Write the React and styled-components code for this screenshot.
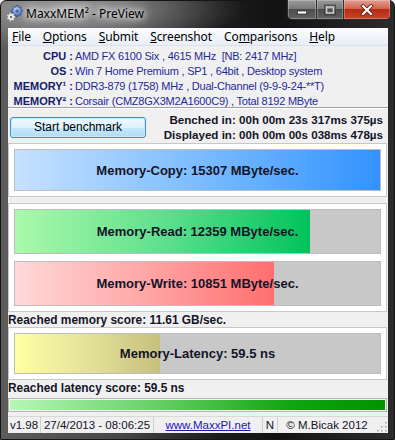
import styled, { createGlobalStyle } from "styled-components";

const UI = `"Liberation Sans", Tahoma, Arial, sans-serif`;
const SEGOE = `"Noto Sans", "Segoe UI", sans-serif`;

const GlobalStyle = createGlobalStyle`
	html, body {
		margin: 0;
		padding: 0;
		background: #fff;
	}
	body {
		width: 395px;
		height: 440px;
		overflow: hidden;
	}
`;

const S = {
	Window: styled.div`
		width: 395px;
		height: 440px;
		box-sizing: border-box;
		display: flex;
		flex-direction: column;
		padding: 0 6px 6px 7px;
		border: 1px solid #151515;
		border-radius: 6px 6px 0 0;
		background:
			radial-gradient(ellipse 230px 55px at 70px 8px, rgba(210, 210, 210, 0.6), rgba(210, 210, 210, 0) 75%),
			linear-gradient(to right, #5c5c5c 0%, #474747 30%, #1d1d1d 55%, #121212 70%, #2c2c2c 100%);
	`,

	TitleBar: styled.div`
		height: 27px;
		margin: 0 -3px 0 -2px;
		display: flex;
		align-items: flex-start;
	`,

	AppIcon: styled.svg`
		width: 17px;
		height: 17px;
		margin: 4px 0 0 0;
		flex: none;
	`,

	Title: styled.div`
		margin: 5px 0 0 3px;
		font-family: ${SEGOE};
		font-size: 12px;
		line-height: 16px;
		color: #000;
		text-shadow: 0 0 6px #fff, 0 0 10px rgba(255, 255, 255, 0.9), 0 0 14px rgba(255, 255, 255, 0.7);
	`,

	Captions: styled.div`
		margin-left: auto;
		display: flex;
		height: 19px;
		margin-top: -1px;
		border: 1px solid #2a2a2a;
		border-top: none;
		border-radius: 0 0 5px 5px;
		overflow: hidden;
	`,

	CaptionButton: styled.div`
		width: ${(p) => p.$w}px;
		display: flex;
		align-items: center;
		justify-content: center;
		box-shadow: inset 0 0 0 1px rgba(255, 255, 255, 0.25);
		background: ${(p) =>
			p.$close
				? "linear-gradient(#e3a092 0%, #d2634f 45%, #b82a13 50%, #c7462c 100%)"
				: "linear-gradient(#9a9a9a 0%, #7a7a7a 45%, #4d4d4d 50%, #626262 100%)"};
		& + & {
			border-left: 1px solid #2e2e2e;
		}
	`,

	Client: styled.div`
		flex: 1;
		display: flex;
		flex-direction: column;
		background: #f0f0f0;
		font-family: ${UI};
	`,

	MenuBar: styled.div`
		height: 18px;
		display: flex;
		align-items: center;
		background: linear-gradient(#fbfcfe, #e8eef7);
		border-bottom: 1px solid #d9e1ec;
		box-sizing: border-box;
		font-family: ${SEGOE};
		font-size: 12px;
		color: #000;
	`,

	MenuItem: styled.span`
		padding: 0 6px;
		letter-spacing: -0.1px;
		&:first-child {
			padding-left: 4px;
		}
	`,

	Info: styled.div`
		height: 61px;
		box-sizing: border-box;
		padding-top: 3px;
		display: grid;
		grid-template-columns: 65px 1fr;
		grid-auto-rows: 15px;
		column-gap: 2px;
		font-size: 11px;
		line-height: 15px;
		white-space: nowrap;
	`,

	Label: styled.div`
		text-align: right;
		font-weight: bold;
		color: #14206e;
	`,

	Value: styled.div`
		color: #1f2a9a;
		letter-spacing: -0.22px;
	`,

	Separator: styled.div`
		height: 0;
		border-top: 1px solid #a0a0a0;
		border-bottom: 1px solid #fff;
	`,

	ActionRow: styled.div`
		height: 30px;
		margin-top: 3px;
		display: flex;
		align-items: center;
		padding: 0 5px 0 2px;
	`,

	StartButton: styled.div`
		width: 136px;
		height: 21px;
		box-sizing: border-box;
		display: flex;
		align-items: center;
		justify-content: center;
		border: 1px solid #3c8fc8;
		border-radius: 3px;
		box-shadow: inset 0 0 0 1px #c8ecfc;
		background: linear-gradient(#eef8fe 0%, #dff2fd 50%, #c6e8fb 51%, #b2dcf5 100%);
		font-size: 12px;
		color: #000;
	`,

	Timing: styled.div`
		margin-left: auto;
		text-align: right;
		font-size: 11.6px;
		font-weight: bold;
		line-height: 15px;
		color: #141428;
	`,

	Panel: styled.div`
		margin: ${(p) => p.$top}px 1px 0 0;
		padding: 5px;
		display: flex;
		flex-direction: column;
		gap: 7px;
		background: #fff;
		border: 1px solid #c8c8c8;
	`,

	Bar: styled.div`
		height: ${(p) => p.$h}px;
		box-sizing: border-box;
		display: grid;
		border: 1px solid #bdbdbd;
		background: #c8c8c8;
		& > * {
			grid-area: 1 / 1;
		}
	`,

	Fill: styled.div`
		background: ${(p) => p.$grad};
	`,

	BarText: styled.div`
		align-self: center;
		text-align: center;
		font-size: 13px;
		font-weight: bold;
		color: #141428;
		white-space: nowrap;
	`,

	Score: styled.div`
		height: ${(p) => p.$h}px;
		display: flex;
		align-items: center;
		font-size: 11.9px;
		font-weight: bold;
		color: #141428;
		white-space: nowrap;
	`,

	Progress: styled.div`
		height: 14px;
		margin: 2px 1px 0 0;
		box-sizing: border-box;
		border: 1px solid #b4b4b4;
		padding: 1px;
		background: #f4f4f4;
	`,

	ProgressFill: styled.div`
		height: 100%;
		background: linear-gradient(to right, #b6f7b6 0%, #63cf63 40%, #0fa50f 75%, #009400 100%);
	`,

	StatusBar: styled.div`
		height: 17px;
		margin-top: 4px;
		box-sizing: border-box;
		display: flex;
		border-top: 1px solid #d8d8d8;
		font-size: 11.5px;
		color: #141428;
		white-space: nowrap;
	`,

	StatusCell: styled.div`
		width: ${(p) => p.$w}px;
		flex: ${(p) => (p.$grow ? 1 : "none")};
		display: flex;
		align-items: center;
		justify-content: center;
		padding-right: ${(p) => p.$pr ?? 0}px;
		box-sizing: border-box;
		position: relative;
		& + & {
			border-left: 1px solid #cfcfcf;
		}
	`,

	Link: styled.span`
		color: #1a1aa8;
		text-decoration: underline;
	`,

	Grip: styled.svg`
		position: absolute;
		right: 1px;
		bottom: 1px;
		width: 11px;
		height: 11px;
	`,
};

const gear = (cx, cy, ro, ri, teeth) => {
	const pts = [];
	const step = (Math.PI * 2) / teeth;
	for (let i = 0; i < teeth; i++) {
		const a = i * step;
		[
			[a - step * 0.22, ro],
			[a + step * 0.22, ro],
			[a + step * 0.32, ri],
			[a + step * 0.68, ri],
		].forEach(([t, r]) => pts.push(`${(cx + r * Math.cos(t)).toFixed(2)},${(cy + r * Math.sin(t)).toFixed(2)}`));
	}
	return pts.join(" ");
};

const AppIcon = () => (
	<S.AppIcon viewBox="0 0 17 17">
		<defs>
			<radialGradient id="gb" cx="40%" cy="35%" r="70%">
				<stop offset="0" stopColor="#b8d4ff" />
				<stop offset="1" stopColor="#2c5cc8" />
			</radialGradient>
		</defs>
		<polygon points={gear(11, 6, 5.6, 4.2, 8)} fill="url(#gb)" stroke="#1c3c90" strokeWidth="0.6" />
		<circle cx="11" cy="6" r="1.6" fill="#5a5a5a" />
		<polygon points={gear(5, 12, 4.4, 3.2, 7)} fill="#f4f4f4" stroke="#777" strokeWidth="0.6" />
		<circle cx="5" cy="12" r="1.2" fill="#666" />
	</S.AppIcon>
);

const Glyph = ({ kind }) => (
	<svg width="14" height="12" viewBox="0 0 14 12">
		{kind === "min" && <rect x="2.5" y="7" width="9" height="3" fill="#fff" stroke="#333" strokeWidth="0.8" />}
		{kind === "max" && (
			<g>
				<rect x="2.5" y="2" width="9" height="8" fill="none" stroke="#333" strokeWidth="3" opacity="0.6" />
				<rect x="3.5" y="3" width="7" height="6" fill="none" stroke="#cfcfcf" strokeWidth="1.6" />
			</g>
		)}
		{kind === "close" && (
			<g strokeLinecap="square">
				<path d="M3 2 L11 10 M11 2 L3 10" stroke="#5a1a10" strokeWidth="3.8" />
				<path d="M3 2 L11 10 M11 2 L3 10" stroke="#fff" strokeWidth="2.2" />
			</g>
		)}
	</svg>
);

const menu = [
	["F", "ile"],
	["O", "ptions"],
	["S", "ubmit"],
	["S", "creenshot"],
	["Co", "m", "parisons"],
	["H", "elp"],
];

const info = [
	["CPU :", "AMD FX 6100 Six , 4615 MHz\u00a0\u00a0[NB: 2417 MHz]"],
	["OS :", "Win 7 Home Premium , SP1 , 64bit , Desktop system"],
	["MEMORY\u00b9 :", "DDR3-879 (1758) MHz , Dual-Channel (9-9-9-24-**T)"],
	["MEMORY\u00b2 :", "Corsair (CMZ8GX3M2A1600C9) , Total 8192 MByte"],
];

const copy = 15307;

const bars = {
	copy: { label: "Memory-Copy: 15307 MByte/sec.", value: 15307, h: 42, grad: "linear-gradient(to right, #c6e2ff, #7cbcff 50%, #3293ff)" },
	read: { label: "Memory-Read: 12359 MByte/sec.", value: 12359, h: 45, grad: "linear-gradient(to right, #aaf9aa, #5fe08e 50%, #00c35c)" },
	write: { label: "Memory-Write: 10851 MByte/sec.", value: 10851, h: 45, grad: "linear-gradient(to right, #ffd9d9, #ffa6a6 50%, #ff6f6f)" },
};

const Bar = ({ label, pct, h, grad }) => (
	<S.Bar $h={h}>
		<S.Fill $grad={grad} style={{ width: `${pct}%` }} />
		<S.BarText>{label}</S.BarText>
	</S.Bar>
);

export default function App() {
	return (
		<>
			<GlobalStyle />
			<S.Window>
				<S.TitleBar>
					<AppIcon />
					<S.Title>MaxxMEM² - PreView</S.Title>
					<S.Captions>
						<S.CaptionButton $w={28}>
							<Glyph kind="min" />
						</S.CaptionButton>
						<S.CaptionButton $w={26}>
							<Glyph kind="max" />
						</S.CaptionButton>
						<S.CaptionButton $w={46} $close>
							<Glyph kind="close" />
						</S.CaptionButton>
					</S.Captions>
				</S.TitleBar>

				<S.Client>
					<S.MenuBar>
						{menu.map((m, i) => (
							<S.MenuItem key={i}>
								{m.length === 2 ? (
									<>
										<u>{m[0]}</u>
										{m[1]}
									</>
								) : (
									<>
										{m[0]}
										<u>{m[1]}</u>
										{m[2]}
									</>
								)}
							</S.MenuItem>
						))}
					</S.MenuBar>

					<S.Info>
						{info.map(([k, v]) => (
							<>
								<S.Label key={k}>{k}</S.Label>
								<S.Value key={k + "v"}>{v}</S.Value>
							</>
						))}
					</S.Info>

					<S.Separator />

					<S.ActionRow>
						<S.StartButton>Start benchmark</S.StartButton>
						<S.Timing>
							<div>Benched in: 00h 00m 23s 317ms 375µs</div>
							<div>Displayed in: 00h 00m 00s 038ms 478µs</div>
						</S.Timing>
					</S.ActionRow>

					<S.Panel $top={1}>
						<Bar label={bars.copy.label} pct={(bars.copy.value / copy) * 100} h={bars.copy.h} grad={bars.copy.grad} />
					</S.Panel>

					<S.Panel $top={6}>
						<Bar label={bars.read.label} pct={(bars.read.value / copy) * 100} h={bars.read.h} grad={bars.read.grad} />
						<Bar label={bars.write.label} pct={(bars.write.value / copy) * 100} h={bars.write.h} grad={bars.write.grad} />
					</S.Panel>

					<S.Score $h={15}>Reached memory score: 11.61 GB/sec.</S.Score>

					<S.Panel $top={0}>
						<Bar
							label="Memory-Latency: 59.5 ns"
							pct={39.8}
							h={41}
							grad="linear-gradient(to right, #ffffa3, #e4e29a 50%, #c6c07e)"
						/>
					</S.Panel>

					<S.Score $h={16}>Reached latency score: 59.5 ns</S.Score>

					<S.Progress>
						<S.ProgressFill />
					</S.Progress>

					<S.StatusBar>
						<S.StatusCell $w={32}>v1.98</S.StatusCell>
						<S.StatusCell $w={113}>27/4/2013 - 08:06:25</S.StatusCell>
						<S.StatusCell $w={109}>
							<S.Link>www.MaxxPI.net</S.Link>
						</S.StatusCell>
						<S.StatusCell $w={15}>N</S.StatusCell>
						<S.StatusCell $grow $pr={12}>
							© M.Bicak 2012
							<S.Grip viewBox="0 0 11 11">
								{[
									[9, 1],
									[9, 5],
									[5, 5],
									[9, 9],
									[5, 9],
									[1, 9],
								].map(([x, y]) => (
									<rect key={`${x}${y}`} x={x} y={y} width="1.5" height="1.5" fill="#a0a0a0" />
								))}
							</S.Grip>
						</S.StatusCell>
					</S.StatusBar>
				</S.Client>
			</S.Window>
		</>
	);
}
